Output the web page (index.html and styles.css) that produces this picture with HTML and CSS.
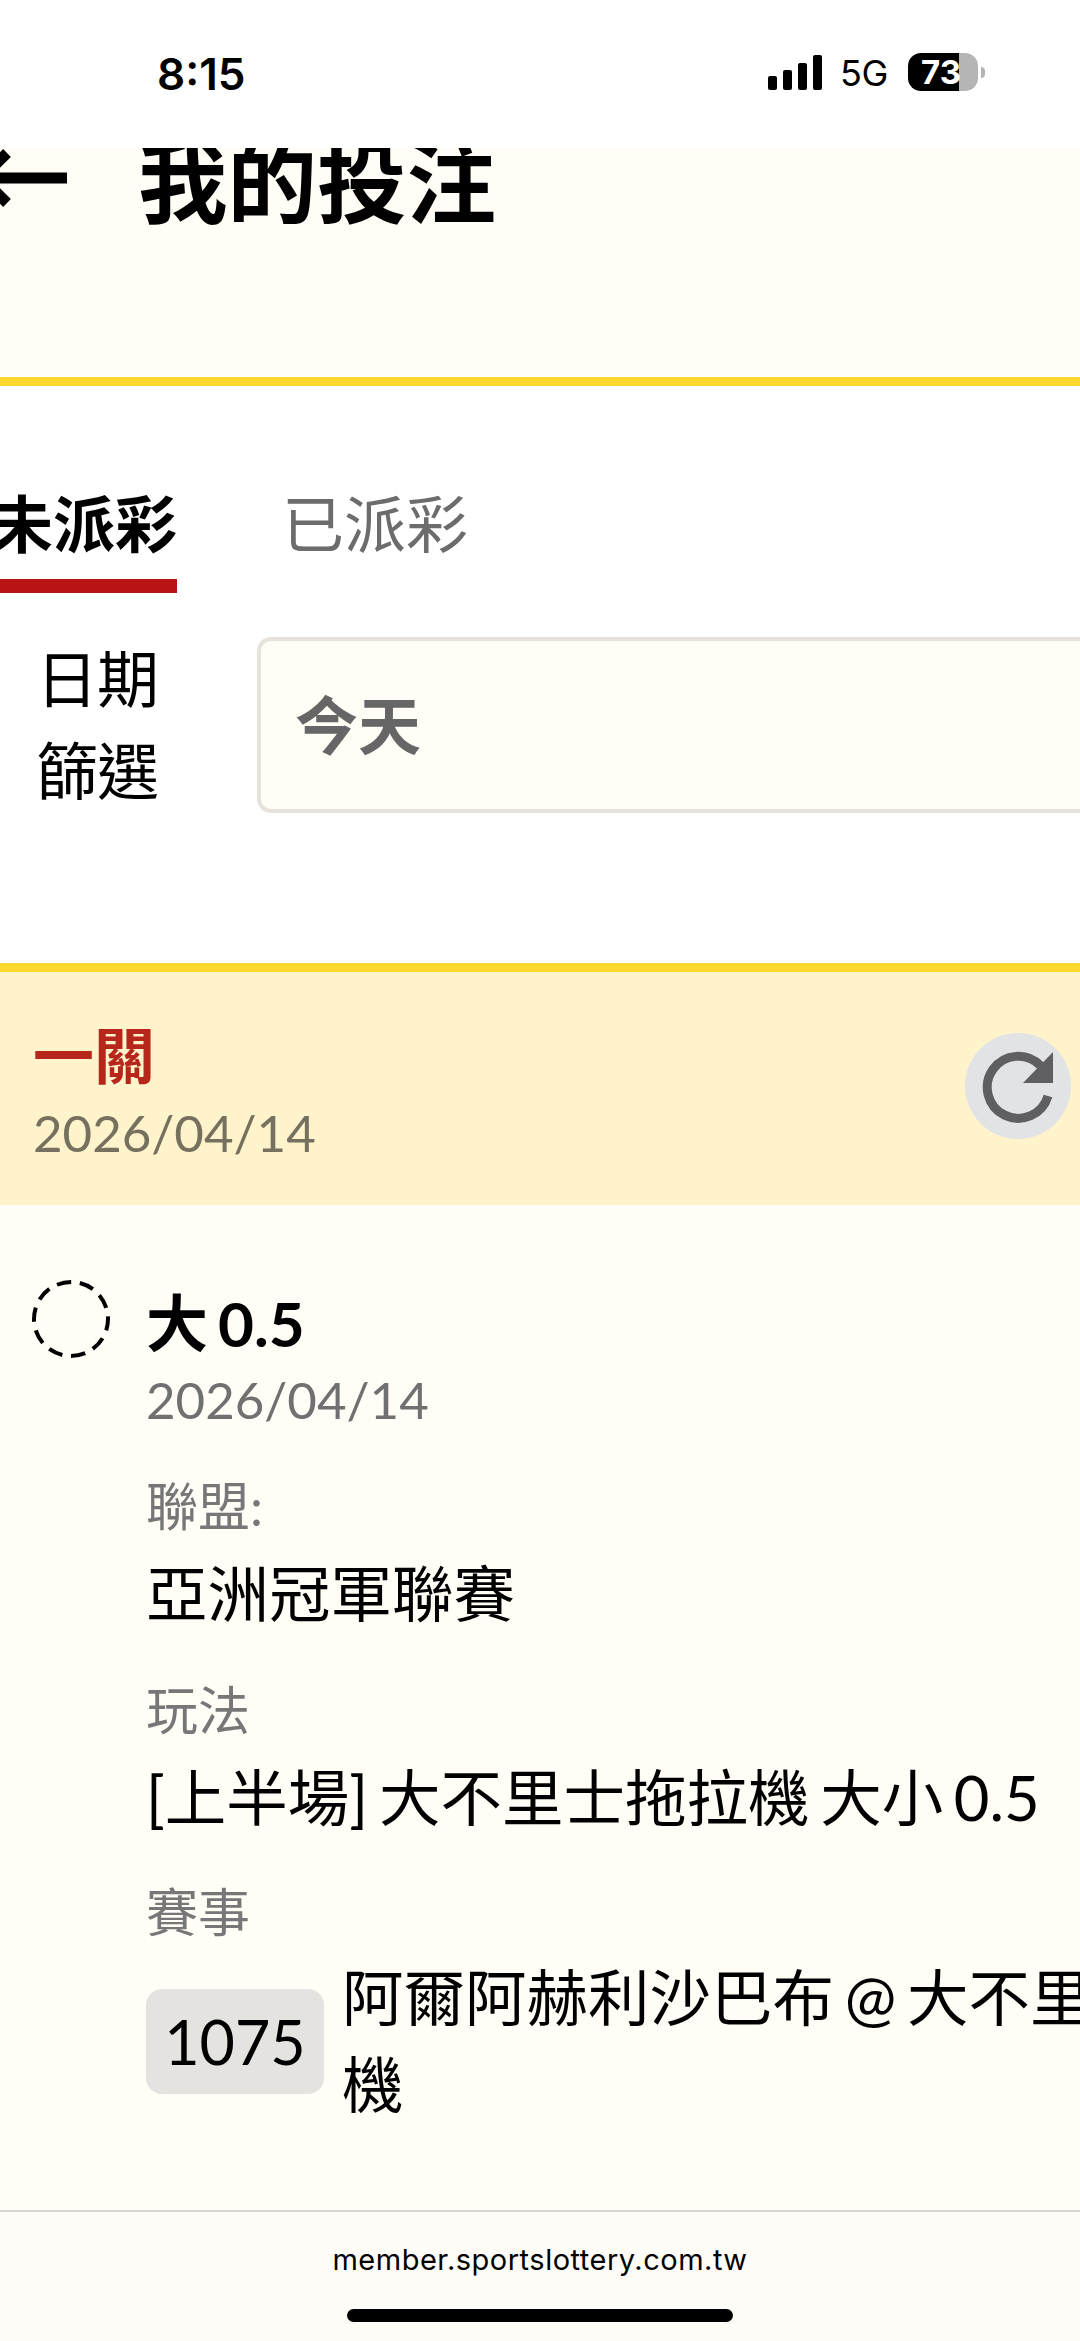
FILE: index.html
```html
<!DOCTYPE html>
<html lang="zh-Hant">
<head>
    <meta charset="UTF-8">
    <title>我的投注</title>
    <link rel="stylesheet" href="styles.css">
</head>
<body>
    <div class="status-bar">
        <span class="clock">8:15</span>
        <div class="status-right">
            <div class="signal">
                <i class="bar bar-1"></i>
                <i class="bar bar-2"></i>
                <i class="bar bar-3"></i>
                <i class="bar bar-4"></i>
            </div>
            <span class="network">5G</span>
            <div class="battery">
                <div class="battery-body"><span>73</span></div>
                <i class="battery-tip"></i>
            </div>
        </div>
    </div>

    <header class="top-header">
        <div class="title-row">
            <svg class="back-arrow" width="100" height="90" viewBox="0 0 100 90">
                <path d="M14 41 H99" fill="none" stroke="#000" stroke-width="11"/>
                <path d="M39 16 L14 41 L39 66" fill="none" stroke="#000" stroke-width="11"/>
            </svg>
            <h1>我的投注</h1>
        </div>
    </header>

    <nav class="tabs">
        <a class="tab active">未派彩</a>
        <a class="tab">已派彩</a>
    </nav>

    <div class="date-filter">
        <label>日期<br>篩選</label>
        <div class="date-select">今天</div>
    </div>

    <section class="bet-head">
        <div>
            <div class="bet-type">一關</div>
            <div class="bet-date">2026/04/14</div>
        </div>
        <button class="refresh">
            <svg width="72" height="74" viewBox="0 0 72 74">
                <path d="M66 47 A31 31 0 1 1 58.400 16.600" fill="none" stroke="#5f5f61" stroke-width="9"/>
                <path d="M71 3 V34 H41 Z" fill="#5f5f61"/>
            </svg>
        </button>
    </section>

    <section class="bet-body">
        <div class="pick-row">
            <svg class="pending" width="80" height="80" viewBox="0 0 80 80">
                <circle cx="40" cy="40" r="37" fill="none" stroke="#000" stroke-width="4" stroke-dasharray="14.500 8.750" stroke-dashoffset="3"/>
            </svg>
            <div>
                <div class="pick">大 0.5</div>
                <div class="pick-date">2026/04/14</div>
            </div>
        </div>

        <div class="info">
            <div class="info-label">聯盟:</div>
            <div class="info-value">亞洲冠軍聯賽</div>
        </div>
        <div class="info">
            <div class="info-label">玩法</div>
            <div class="info-value">[上半場] 大不里士拖拉機 大小 0.5</div>
        </div>
        <div class="info info-match">
            <div class="info-label">賽事</div>
            <div class="match">
                <span class="match-no">1075</span>
                <span class="match-name">阿爾阿赫利沙巴布 @ 大不里士拖拉機</span>
            </div>
        </div>
    </section>

    <footer class="browser-bar">
        <span class="url">member.sportslottery.com.tw</span>
        <i class="home-bar"></i>
    </footer>
</body>
</html>
```

FILE: styles.css
```css
* {
    margin: 0;
    padding: 0;
    box-sizing: border-box;
}

html, body {
    width: 1080px;
    height: 2341px;
    overflow: hidden;
}

body {
    display: flex;
    flex-direction: column;
    background: #fff;
    color: #000;
    font-family: Lato, "Noto Sans CJK TC", sans-serif;
}

/* status bar */
.status-bar {
    height: 148px;
    flex: none;
    display: flex;
    justify-content: space-between;
    padding: 50px 95px 0 157px;
    font-family: Inter, "Liberation Sans", sans-serif;
}

.clock {
    font-size: 44px;
    font-weight: 600;
    line-height: 48px;
}

.status-right {
    display: flex;
    height: 38px;
    margin-top: 3px;
}

.signal {
    display: flex;
    align-items: flex-end;
    gap: 6px;
    height: 35px;
    margin-top: 2px;
}

.bar {
    width: 9px;
    background: #000;
    border-radius: 2px;
}

.bar-1 { height: 14px; }
.bar-2 { height: 20px; }
.bar-3 { height: 27px; }
.bar-4 { height: 35px; }

.network {
    margin-left: 18px;
    font-size: 36px;
    line-height: 40px;
    width: 48px;
    letter-spacing: -0.5px;
}

.battery {
    display: flex;
    align-items: center;
    margin-left: 20px;
}

.battery-body {
    width: 70px;
    height: 38px;
    border-radius: 13px;
    background: linear-gradient(90deg, #000 51px, #b5b5b5 51px);
    color: #fff;
    font-size: 33px;
    font-weight: 700;
    line-height: 38px;
    padding-left: 13px;
}

.battery-tip {
    width: 4px;
    height: 11px;
    margin-left: 3px;
    background: #b5b5b5;
    border-radius: 0 4px 4px 0;
}

/* header */
.top-header {
    height: 238px;
    flex: none;
    background: #fffdf6;
    border-bottom: 9px solid #ffd82b;
    overflow: hidden;
}

.title-row {
    display: flex;
    align-items: center;
    gap: 70px;
    margin: -16px 0 0 -32px;
}

.back-arrow {
    flex: none;
}

.title-row h1 {
    font-size: 89.500px;
    font-weight: 700;
    line-height: 100px;
}

/* tabs */
.tabs {
    display: flex;
    gap: 105px;
    height: 207px;
    flex: none;
    margin-left: -9px;
}

.tab {
    height: 207px;
    padding-top: 98px;
    font-size: 62px;
    line-height: 80px;
    color: #6c6c6c;
}

.tab.active {
    color: #000;
    font-weight: 700;
    background: linear-gradient(#b81414, #b81414) 0 193px / 100% 14px no-repeat;
}

/* date */
.date-filter {
    display: flex;
    align-items: flex-start;
    height: 370px;
    flex: none;
    padding-top: 44px;
}

.date-filter label {
    flex: none;
    width: 257px;
    padding-left: 36px;
    font-size: 62px;
    line-height: 92px;
    margin-top: -4px;
    white-space: nowrap;
    letter-spacing: -1px;
}

.date-select {
    flex: none;
    width: 900px;
    height: 176px;
    background: #fffdf6;
    border: 4px solid #e6e3dd;
    border-radius: 14px;
    padding-left: 34px;
    font-size: 63px;
    font-weight: 700;
    line-height: 168px;
    color: #666;
}

/* bet */
.bet-head {
    display: flex;
    justify-content: space-between;
    align-items: center;
    height: 242px;
    flex: none;
    padding: 6px 9px 0 33px;
    background: #fff3cc;
    border-top: 9px solid #ffd82b;
}

.bet-type {
    font-size: 61px;
    font-weight: 700;
    line-height: 76px;
    color: #b7261a;
}

.bet-date {
    margin-top: 6px;
    font-size: 51px;
    line-height: 66px;
    color: #76715f;
}

.refresh {
    width: 106px;
    height: 106px;
    margin-top: -12px;
    display: flex;
    align-items: center;
    justify-content: center;
    border: none;
    border-radius: 50%;
    background: #e2e3e5;
}

.bet-body {
    flex: 1;
    width: 1300px;
    background: #fffdf6;
    padding: 76px 0 0 31px;
}

.pick-row {
    display: flex;
    gap: 35px;
}

.pending {
    flex: none;
    margin-top: -2px;
}

.pick {
    font-size: 62px;
    font-weight: 700;
    line-height: 84px;
    word-spacing: -5px;
}

.pick-date {
    font-size: 51px;
    line-height: 70px;
    color: #707070;
}

.info {
    margin: 29px 0 0 115px;
}

.info + .info {
    margin-top: 30px;
}

.info + .info-match {
    margin-top: 28px;
}

.info-label {
    font-size: 52px;
    line-height: 84px;
    color: #777;
}

.info-value {
    font-size: 61.500px;
    line-height: 90px;
    word-spacing: -5px;
}

.match {
    display: flex;
    align-items: center;
    gap: 18px;
}

.match-no {
    flex: none;
    width: 178px;
    height: 105px;
    border-radius: 16px;
    background: #e5e3df;
    font-size: 61px;
    line-height: 105px;
    text-align: center;
}

.match-name {
    width: 970px;
    font-size: 61.500px;
    line-height: 87px;
    word-spacing: -5px;
}

/* browser bar */
.browser-bar {
    height: 131px;
    flex: none;
    display: flex;
    flex-direction: column;
    align-items: center;
    background: #fefcf6;
    border-top: 2px solid #d8d8d6;
    font-family: Inter, "Liberation Sans", sans-serif;
}

.url {
    margin-top: 30px;
    font-size: 29px;
    line-height: 36px;
    letter-spacing: 0.5px;
}

.home-bar {
    width: 386px;
    height: 13px;
    margin-top: 31px;
    border-radius: 7px;
    background: #000;
}
```
